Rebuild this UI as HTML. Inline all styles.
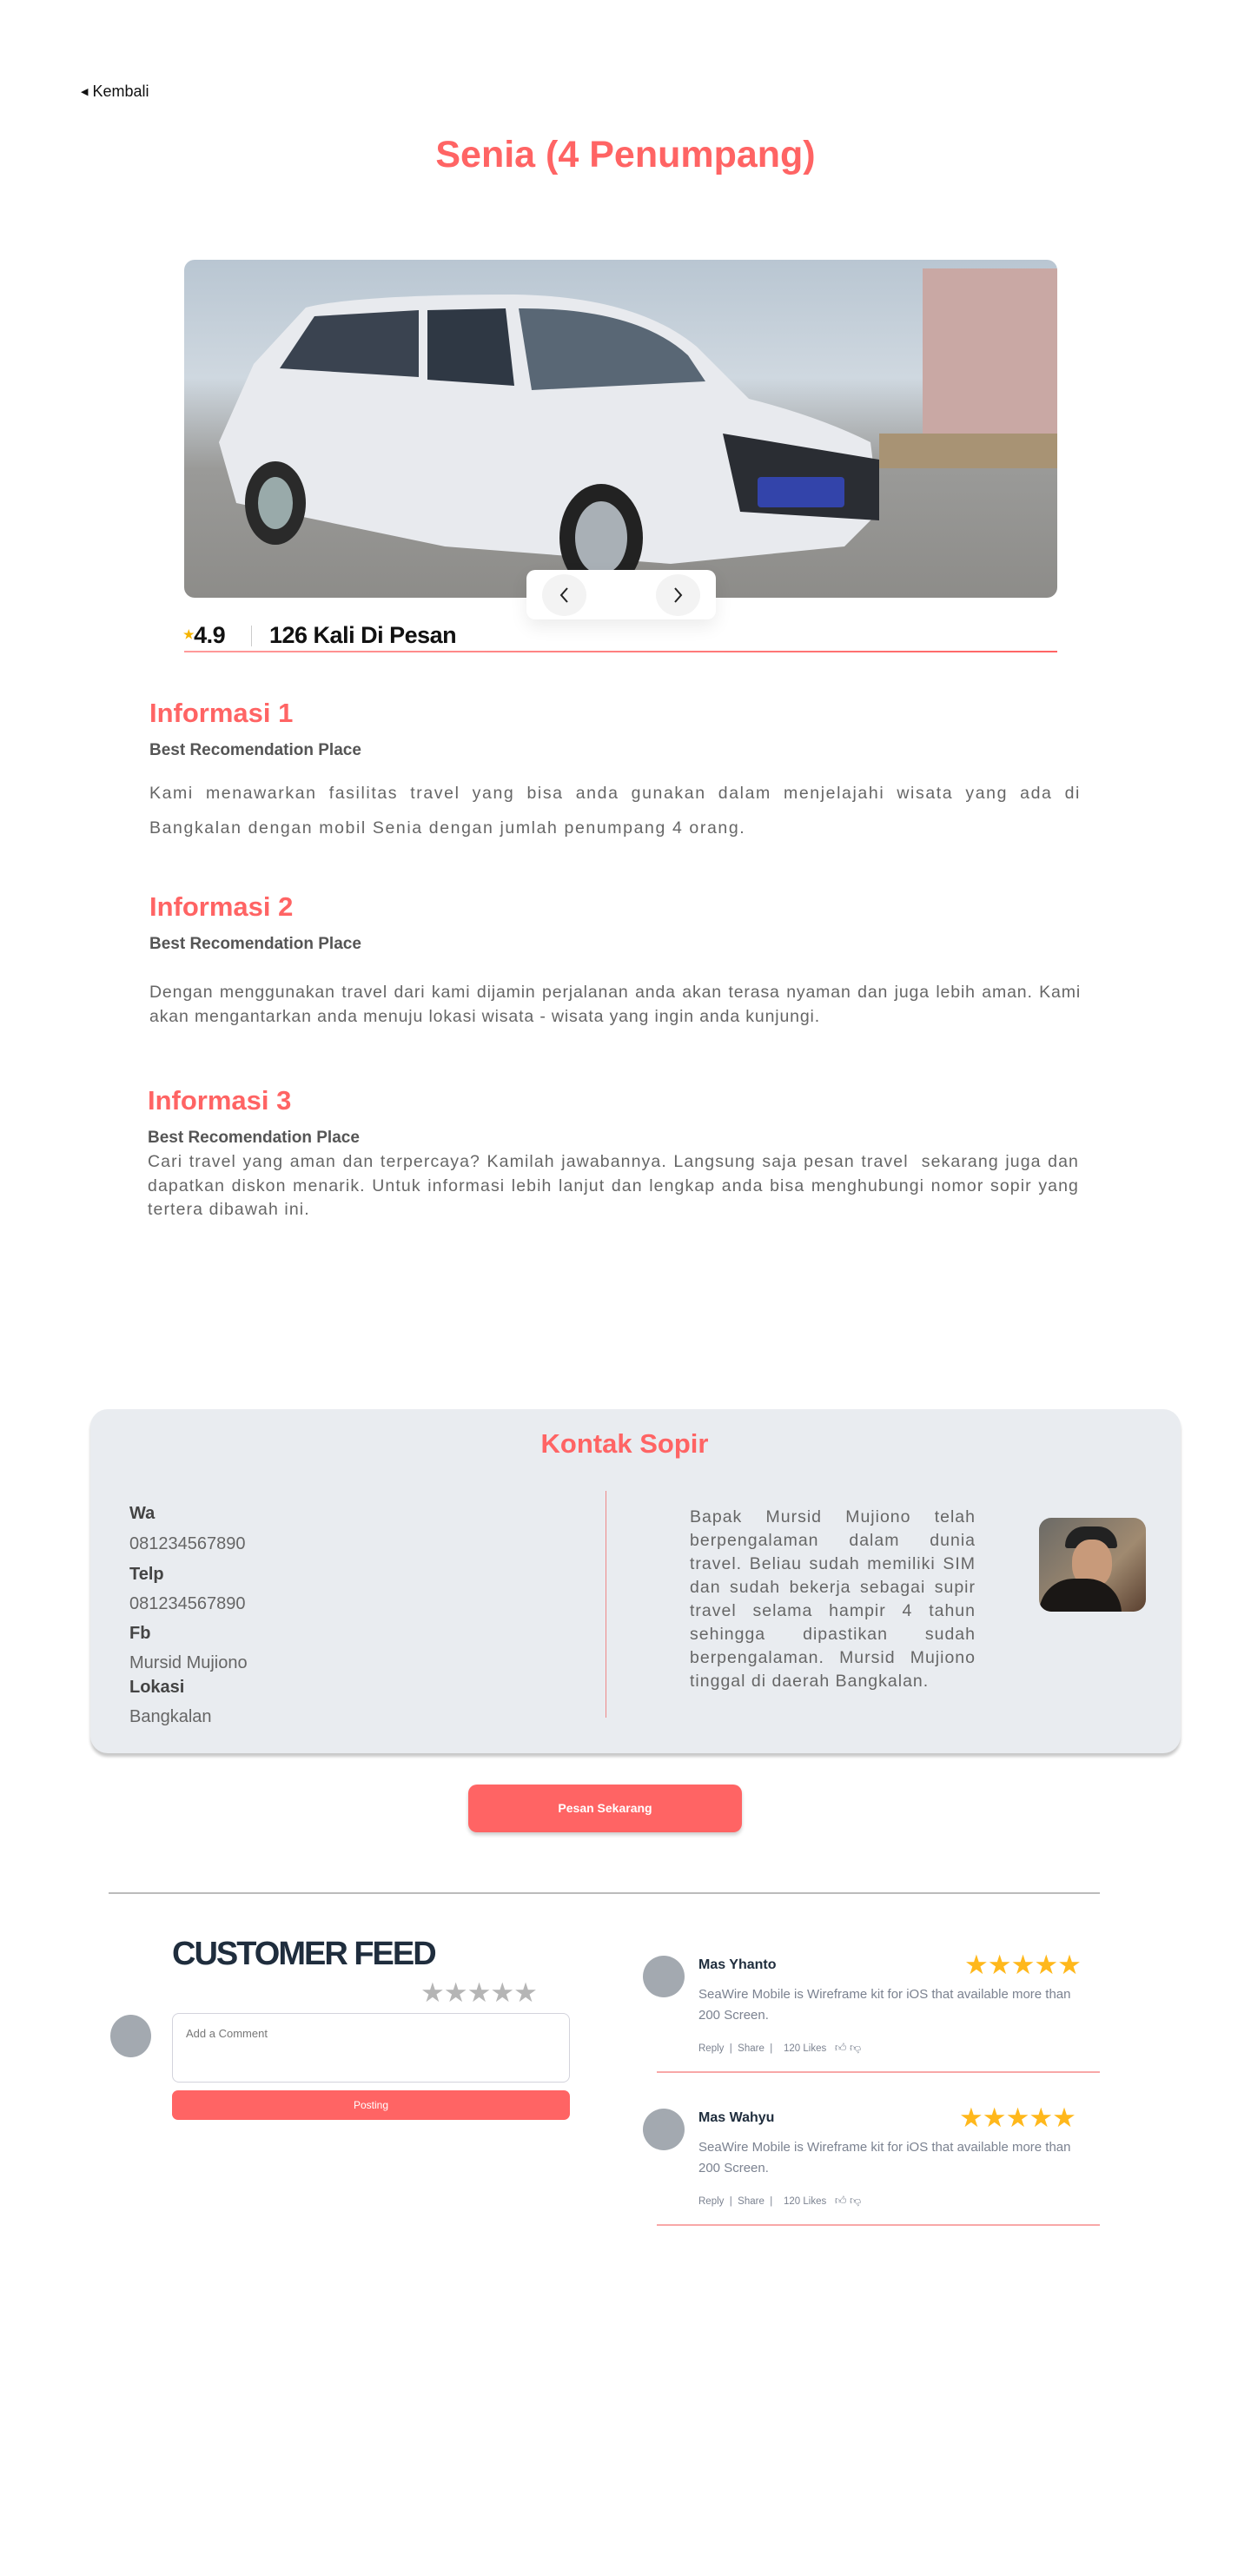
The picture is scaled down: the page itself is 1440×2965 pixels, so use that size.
<!DOCTYPE html>
<html><head><meta charset="utf-8">
<style>
*{margin:0;padding:0;box-sizing:border-box}
body{width:1440px;height:2965px;background:#fff;position:relative;font-family:"Liberation Sans",sans-serif;overflow:hidden}
.a{position:absolute;white-space:nowrap}
.h{font-size:31px;font-weight:bold;color:#FF6464}
.brp{font-size:19px;font-weight:bold;color:#555}
.p{position:absolute;font-size:19.5px;color:#666;text-align:justify;text-align-last:left}
.lbl{font-size:20px;font-weight:bold;color:#444}
.val{font-size:20px;color:#666}
.cm{position:absolute;left:804px;width:445px}
</style></head><body>

<div class="a" style="left:93px;top:95px;font-size:18px;color:#111"><span style="font-size:11px;vertical-align:2px">&#9664;</span> Kembali</div>
<div class="a" style="left:0;width:1440px;text-align:center;top:154px;font-size:43px;font-weight:bold;color:#FF6464;">Senia (4 Penumpang)</div>

<div class="a" style="left:212px;top:299px;width:1005px;height:389px;border-radius:12px;overflow:hidden;background:linear-gradient(#b9c6d2 0%,#cfd8e0 35%,#9a9a98 62%,#8d8c89 100%)">
<svg width="1005" height="389" viewBox="0 0 1005 389">
<rect x="850" y="10" width="160" height="190" fill="#c9a8a4"/>
<rect x="800" y="200" width="205" height="40" fill="#a89374"/>
<path d="M80 120 L140 55 Q200 40 380 40 Q520 42 590 100 L650 160 Q730 180 790 210 L800 290 L760 330 L560 350 L300 330 L60 280 L40 210 Z" fill="#e8eaee"/>
<path d="M110 125 L150 65 L270 58 L270 135 Z" fill="#3a4350"/>
<path d="M280 58 L370 56 L380 145 L280 138 Z" fill="#2f3844"/>
<path d="M385 56 Q520 55 580 110 L600 140 L400 150 Z" fill="#596775"/>
<ellipse cx="105" cy="280" rx="35" ry="48" fill="#2a2a2a"/><ellipse cx="105" cy="280" rx="20" ry="30" fill="#9aa"/>
<ellipse cx="480" cy="320" rx="48" ry="62" fill="#222"/><ellipse cx="480" cy="320" rx="30" ry="42" fill="#a9b0b6"/>
<path d="M620 200 L800 230 L800 300 L640 290 Z" fill="#2a2d33"/>
<rect x="660" y="250" width="100" height="35" rx="4" fill="#3344aa"/>
</svg>
</div>
<div class="a" style="left:606px;top:656px;width:218px;height:57px;background:#fff;border-radius:10px;box-shadow:0 8px 20px rgba(0,0,0,.08)">
<div class="a" style="left:18px;top:5px;width:51px;height:48px;border-radius:50%;background:#f3f3f3"><svg width="51" height="48"><path d="M29 16 L22 24 L29 32" stroke="#222" stroke-width="2" fill="none"/></svg></div>
<div class="a" style="left:149px;top:5px;width:51px;height:48px;border-radius:50%;background:#f3f3f3"><svg width="51" height="48"><path d="M22 16 L29 24 L22 32" stroke="#222" stroke-width="2" fill="none"/></svg></div>
</div>
<div class="a" style="left:211px;top:716px;font-size:27px;font-weight:bold;color:#111;letter-spacing:-0.5px"><span style="color:#f5b400;font-size:14px;vertical-align:5px">&#9733;</span>4.9</div>
<div class="a" style="left:289px;top:720px;width:1px;height:24px;background:#ccc"></div>
<div class="a" style="left:310px;top:716px;font-size:27px;font-weight:bold;color:#111;letter-spacing:-0.5px">126 Kali Di Pesan</div>
<div class="a" style="left:212px;top:749px;width:1005px;height:2px;background:linear-gradient(90deg,#ff9a9a,#ff6464)"></div>

<div class="a h" style="left:172px;top:803px">Informasi 1</div>
<div class="a brp" style="left:172px;top:853px">Best Recomendation Place</div>
<div class="p" style="left:172px;top:893px;width:1072px;line-height:40px;letter-spacing:1.6px">Kami menawarkan fasilitas travel yang bisa anda gunakan dalam menjelajahi wisata yang ada di Bangkalan dengan mobil Senia dengan jumlah penumpang 4 orang.</div>

<div class="a h" style="left:172px;top:1026px">Informasi 2</div>
<div class="a brp" style="left:172px;top:1076px">Best Recomendation Place</div>
<div class="p" style="left:172px;top:1128px;width:1072px;line-height:28px;letter-spacing:0.85px">Dengan menggunakan travel dari kami dijamin perjalanan anda akan terasa nyaman dan juga lebih aman. Kami akan mengantarkan anda menuju lokasi wisata - wisata yang ingin anda kunjungi.</div>

<div class="a h" style="left:170px;top:1249px">Informasi 3</div>
<div class="a brp" style="left:170px;top:1299px">Best Recomendation Place</div>
<div class="p" style="left:170px;top:1324px;width:1072px;line-height:27.5px;letter-spacing:1.1px">Cari travel yang aman dan terpercaya? Kamilah jawabannya. Langsung saja pesan travel &nbsp;sekarang juga dan dapatkan diskon menarik. Untuk informasi lebih lanjut dan lengkap anda bisa menghubungi nomor sopir yang tertera dibawah ini.</div>

<div class="a" style="left:104px;top:1622px;width:1255px;height:396px;background:#E9ECF0;border-radius:20px;box-shadow:0 4px 3px rgba(0,0,0,.22)"></div>
<div class="a" style="left:104px;width:1230px;text-align:center;top:1644px;font-size:31px;font-weight:bold;color:#FF6464">Kontak Sopir</div>
<div class="a lbl" style="left:149px;top:1731px">Wa</div>
<div class="a val" style="left:149px;top:1766px">081234567890</div>
<div class="a lbl" style="left:149px;top:1801px">Telp</div>
<div class="a val" style="left:149px;top:1835px">081234567890</div>
<div class="a lbl" style="left:149px;top:1869px">Fb</div>
<div class="a val" style="left:149px;top:1903px">Mursid Mujiono</div>
<div class="a lbl" style="left:149px;top:1931px">Lokasi</div>
<div class="a val" style="left:149px;top:1965px">Bangkalan</div>
<div class="a" style="left:697px;top:1716px;width:1px;height:261px;background:#e88"></div>
<div class="p" style="left:794px;top:1733px;width:329px;line-height:27px;font-size:19.5px;letter-spacing:1px">Bapak Mursid Mujiono telah berpengalaman dalam dunia travel. Beliau sudah memiliki SIM dan sudah bekerja sebagai supir travel selama hampir 4 tahun sehingga dipastikan sudah berpengalaman. Mursid Mujiono tinggal di daerah Bangkalan.</div>
<div class="a" style="left:1196px;top:1747px;width:123px;height:108px;border-radius:14px;overflow:hidden;background:linear-gradient(135deg,#6b6a66,#a08a70 60%,#5a4030)">
<div class="a" style="left:30px;top:10px;width:60px;height:25px;border-radius:30px 30px 4px 4px;background:#222"></div>
<div class="a" style="left:38px;top:25px;width:46px;height:55px;border-radius:45%;background:#c89a7a"></div>
<div class="a" style="left:0;top:70px;width:95px;height:40px;border-radius:40px 40px 0 0;background:#1a1715"></div>
</div>

<div class="a" style="left:539px;top:2054px;width:315px;height:55px;background:#FF6464;border-radius:10px;box-shadow:0 3px 4px rgba(0,0,0,.2);color:#fff;font-size:14px;font-weight:bold;text-align:center;line-height:55px">Pesan Sekarang</div>

<div class="a" style="left:125px;top:2178px;width:1141px;height:2px;background:#bbb"></div>

<div class="a" style="left:198px;top:2228px;font-size:38px;font-weight:bold;color:#1f2d3d;letter-spacing:-2px">CUSTOMER FEED</div>
<div class="a" style="left:484px;top:2276px;font-size:31px;color:#b5b5b5;letter-spacing:-1px">&#9733;&#9733;&#9733;&#9733;&#9733;</div>
<div class="a" style="left:127px;top:2319px;width:47px;height:49px;border-radius:50%;background:#a3a9b0"></div>
<div class="a" style="left:198px;top:2317px;width:458px;height:80px;border:1.5px solid #d3d3dc;border-radius:8px;background:#fff"></div>
<div class="a" style="left:214px;top:2333px;font-size:13px;color:#777">Add a Comment</div>
<div class="a" style="left:198px;top:2406px;width:458px;height:34px;background:#FF6464;border-radius:7px;color:#fff;font-size:12px;text-align:center;line-height:34px">Posting</div>

<div class="a" style="left:740px;top:2251px;width:48px;height:48px;border-radius:50%;background:#a3a9b0"></div>
<div class="a" style="left:804px;top:2253px;font-size:16px;font-weight:bold;color:#1f2d3d">Mas Yhanto</div>
<div class="a" style="left:1110px;top:2244px;font-size:31px;color:#FFB81C;letter-spacing:-1px">&#9733;&#9733;&#9733;&#9733;&#9733;</div>
<div class="cm" style="top:2284px;font-size:15px;color:#7b8290;line-height:24px">SeaWire Mobile is Wireframe kit for iOS that available more than<br>200 Screen.</div>
<div class="a" style="left:804px;top:2349px;font-size:11.5px;color:#7b8290">Reply &nbsp;| &nbsp;Share &nbsp;| &nbsp;&nbsp;&nbsp;120 Likes &nbsp;&nbsp;<span style="font-size:13px">&#128077;&#xFE0E; &#128078;&#xFE0E;</span></div>
<div class="a" style="left:756px;top:2384px;width:510px;height:2px;background:#f8a8a8"></div>

<div class="a" style="left:740px;top:2427px;width:48px;height:48px;border-radius:50%;background:#a3a9b0"></div>
<div class="a" style="left:804px;top:2429px;font-size:16px;font-weight:bold;color:#1f2d3d">Mas Wahyu</div>
<div class="a" style="left:1104px;top:2420px;font-size:31px;color:#FFB81C;letter-spacing:-1px">&#9733;&#9733;&#9733;&#9733;&#9733;</div>
<div class="cm" style="top:2460px;font-size:15px;color:#7b8290;line-height:24px">SeaWire Mobile is Wireframe kit for iOS that available more than<br>200 Screen.</div>
<div class="a" style="left:804px;top:2525px;font-size:11.5px;color:#7b8290">Reply &nbsp;| &nbsp;Share &nbsp;| &nbsp;&nbsp;&nbsp;120 Likes &nbsp;&nbsp;<span style="font-size:13px">&#128077;&#xFE0E; &#128078;&#xFE0E;</span></div>
<div class="a" style="left:756px;top:2560px;width:510px;height:2px;background:#f8a8a8"></div>

</body></html>
